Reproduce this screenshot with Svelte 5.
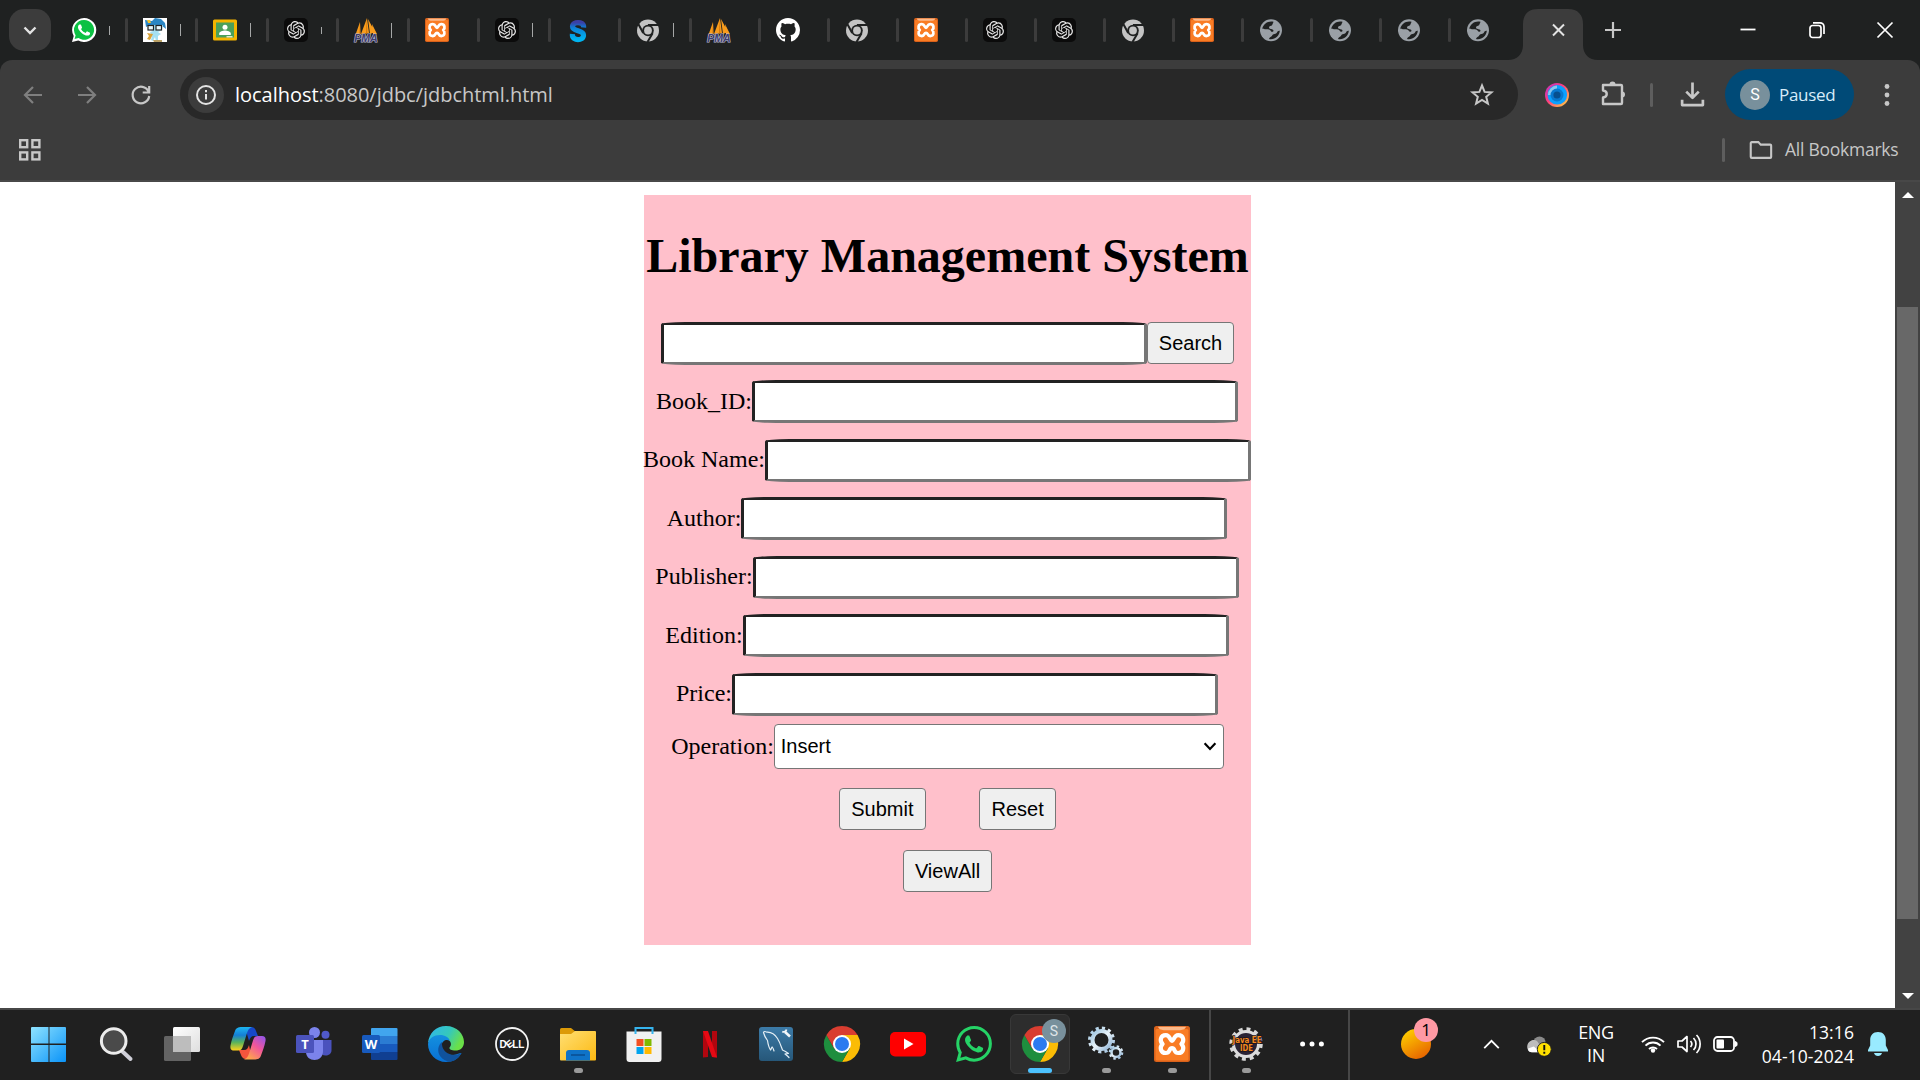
<script>
  const tabs = [
    { icon: 'whatsapp', title: 9 },
    { icon: 'mascot', title: 12 },
    { icon: 'classroom', title: 14 },
    { icon: 'openai', title: 7 },
    { icon: 'pma', title: 15 },
    { icon: 'xampp', title: 0 },
    { icon: 'openai', title: 14 },
    { icon: 'sletter', title: 0 },
    { icon: 'chromegray', title: 14 },
    { icon: 'pma', title: 0 },
    { icon: 'github', title: 0 },
    { icon: 'chromegray', title: 0 },
    { icon: 'xampp', title: 0 },
    { icon: 'openai', title: 0 },
    { icon: 'openai', title: 0 },
    { icon: 'chromegray', title: 0 },
    { icon: 'xampp', title: 0 },
    { icon: 'globe', title: 0 },
    { icon: 'globe', title: 0 },
    { icon: 'globe', title: 0 },
    { icon: 'globe', title: 0 }
  ];

  const fields = ['Book_ID:', 'Book Name:', 'Author:', 'Publisher:', 'Edition:', 'Price:'];

  const pinned = [
    { icon: 'windows' },
    { icon: 'search' },
    { icon: 'taskview' },
    { icon: 'copilot' },
    { icon: 'teams' },
    { icon: 'word' },
    { icon: 'edge' },
    { icon: 'dell' },
    { icon: 'explorer', running: true },
    { icon: 'store' },
    { icon: 'netflix' },
    { icon: 'mysql' },
    { icon: 'chrome' },
    { icon: 'youtube' },
    { icon: 'whatsappline' },
    { icon: 'chrome', active: true },
    { icon: 'gears', running: true },
    { icon: 'xampp', running: true }
  ];
</script>

{#snippet icon(name)}
  {#if name === 'whatsapp'}
    <svg viewBox="0 0 24 24"><path fill="#fff" d="M12 0a12 12 0 0 0-10.3 18L0 24l6.3-1.6A12 12 0 1 0 12 0z"/><path fill="#0cc143" d="M12 2a9.9 9.9 0 0 0-8.4 15.200l-1 3.800 3.900-1A9.900 9.900 0 1 0 12 2z"/><path fill="#fff" d="M17.472 14.382c-.297-.149-1.758-.867-2.03-.967-.273-.099-.471-.148-.67.15-.197.297-.767.966-.94 1.164-.173.199-.347.223-.644.075-.297-.15-1.255-.463-2.39-1.475-.883-.788-1.48-1.761-1.653-2.059-.173-.297-.018-.458.13-.606.134-.133.298-.347.446-.52.149-.174.198-.298.298-.497.099-.198.05-.371-.025-.52-.075-.149-.669-1.612-.916-2.207-.242-.579-.487-.5-.669-.51-.173-.008-.371-.01-.57-.01-.198 0-.52.074-.792.372-.272.297-1.04 1.016-1.04 2.479 0 1.462 1.065 2.875 1.213 3.074.149.198 2.096 3.2 5.077 4.487.709.306 1.262.489 1.694.625.712.227 1.36.195 1.871.118.571-.085 1.758-.719 2.006-1.413.248-.694.248-1.289.173-1.413-.074-.124-.272-.198-.57-.347"/></svg>
  {:else if name === 'whatsappline'}
    <svg viewBox="0 0 24 24"><path fill="#25d366" d="M17.472 14.382c-.297-.149-1.758-.867-2.03-.967-.273-.099-.471-.148-.67.15-.197.297-.767.966-.94 1.164-.173.199-.347.223-.644.075-.297-.15-1.255-.463-2.39-1.475-.883-.788-1.48-1.761-1.653-2.059-.173-.297-.018-.458.13-.606.134-.133.298-.347.446-.52.149-.174.198-.298.298-.497.099-.198.05-.371-.025-.52-.075-.149-.669-1.612-.916-2.207-.242-.579-.487-.5-.669-.51-.173-.008-.371-.01-.57-.01-.198 0-.52.074-.792.372-.272.297-1.04 1.016-1.04 2.479 0 1.462 1.065 2.875 1.213 3.074.149.198 2.096 3.2 5.077 4.487.709.306 1.262.489 1.694.625.712.227 1.36.195 1.871.118.571-.085 1.758-.719 2.006-1.413.248-.694.248-1.289.173-1.413-.074-.124-.272-.198-.57-.347m-5.421 7.403h-.004a9.87 9.87 0 01-5.031-1.378l-.361-.214-3.741.982.998-3.648-.235-.374a9.86 9.86 0 01-1.51-5.26c.001-5.45 4.436-9.884 9.888-9.884 2.64 0 5.122 1.03 6.988 2.898a9.825 9.825 0 012.893 6.994c-.003 5.45-4.437 9.884-9.885 9.884m8.413-18.297A11.815 11.815 0 0012.05 0C5.495 0 .16 5.335.157 11.892c0 2.096.547 4.142 1.588 5.945L.057 24l6.305-1.654a11.882 11.882 0 005.683 1.448h.005c6.554 0 11.89-5.335 11.893-11.893a11.821 11.821 0 00-3.48-8.413z"/></svg>
  {:else if name === 'mascot'}
    <svg viewBox="0 0 24 24"><rect width="24" height="24" fill="#fff"/><path fill="#2a86c4" d="M2 2l7 1 3-3 6 1 4 4 1 6-5-4H7L3 9z"/><path fill="#f2c230" d="M4 2l3 0 1 3-3 0z"/><path fill="#a5e0f2" d="M6 7h14l-1 5-4 2 3 2-3 2 0 5h-2l-1-4-2 4-2-1 1-4-2-4 3-1-4-2z"/><rect x="5" y="7.500" width="5.500" height="4.500" fill="#e8f8fc" stroke="#222" stroke-width="1.200"/><rect x="13" y="7.500" width="5.500" height="4.500" fill="#e8f8fc" stroke="#222" stroke-width="1.200"/><path fill="#d8a23a" d="M4 15l6 1-3 6-3-1 2-3z"/><path fill="#b9a064" d="M10 22h9v2h-8z"/></svg>
  {:else if name === 'classroom'}
    <svg viewBox="0 0 24 24"><rect y="1.500" width="24" height="21" rx="1.500" fill="#f4b400"/><rect x="3" y="4.500" width="18" height="15" fill="#4ba05a"/><circle cx="12" cy="9.300" r="2.500" fill="#fff"/><path fill="#fff" d="M6.200 17v-1.500c0-2 3.800-3 5.800-3s5.800 1 5.800 3V17z"/><path fill="#e3ecc8" d="M13.500 18h6v1.500h-6z"/></svg>
  {:else if name === 'openai'}
    <svg viewBox="0 0 24 24"><rect width="24" height="24" rx="5" fill="#0b0b0b"/><path fill="#e6e6e6" transform="translate(3 3) scale(.75)" d="M22.2819 9.8211a5.9847 5.9847 0 0 0-.5157-4.9108 6.0462 6.0462 0 0 0-6.5098-2.9A6.0651 6.0651 0 0 0 4.9807 4.1818a5.9847 5.9847 0 0 0-3.9977 2.9 6.0462 6.0462 0 0 0 .7427 7.0966 5.98 5.98 0 0 0 .511 4.9107 6.051 6.051 0 0 0 6.5146 2.9001A5.9847 5.9847 0 0 0 13.2599 24a6.0557 6.0557 0 0 0 5.7718-4.2058 5.9894 5.9894 0 0 0 3.9977-2.9001 6.0557 6.0557 0 0 0-.7475-7.0729zm-9.022 12.6081a4.4755 4.4755 0 0 1-2.8764-1.0408l.1419-.0804 4.7783-2.7582a.7948.7948 0 0 0 .3927-.6813v-6.7369l2.02 1.1686a.071.071 0 0 1 .038.0615v5.5826a4.504 4.504 0 0 1-4.4945 4.4849zm-9.6607-4.1254a4.4708 4.4708 0 0 1-.5346-3.0137l.142.0852 4.783 2.7582a.7712.7712 0 0 0 .7806 0l5.8428-3.3685v2.3324a.0804.0804 0 0 1-.0332.0615L9.74 19.9502a4.4992 4.4992 0 0 1-6.1408-1.6464zM2.3408 7.8956a4.485 4.485 0 0 1 2.3655-1.9728V11.6a.7664.7664 0 0 0 .3879.6765l5.8144 3.3543-2.0201 1.1685a.0757.0757 0 0 1-.071 0l-4.8303-2.7865A4.504 4.504 0 0 1 2.3408 7.872zm16.5963 3.8558L13.1038 8.364 15.1192 7.2a.0757.0757 0 0 1 .071 0l4.8303 2.7913a4.4944 4.4944 0 0 1-.6765 8.1042v-5.6772a.79.79 0 0 0-.407-.667zm2.0107-3.0231l-.142-.0852-4.7735-2.7818a.7759.7759 0 0 0-.7854 0L9.409 9.2297V6.8974a.0662.0662 0 0 1 .0284-.0615l4.8303-2.7866a4.4992 4.4992 0 0 1 6.6802 4.66zM8.3065 12.863l-2.02-1.1638a.0804.0804 0 0 1-.038-.0567V6.0742a4.4992 4.4992 0 0 1 7.3757-3.4537l-.142.0805L8.704 5.459a.7948.7948 0 0 0-.3927.6813zm1.0976-2.3654l2.602-1.4998 2.6069 1.4998v2.9994l-2.5974 1.4997-2.6067-1.4997Z"/></svg>
  {:else if name === 'pma'}
    <svg viewBox="0 0 24 24"><path fill="#f89c1c" d="M6 4L1 18h5.500zM13 0L7 16l8-1zM14 1l7 13-5 2zM18 6l5 10h-4z"/><path fill="#c96f0a" d="M12.600 1l.8 15h-1.200zM6 4l.5 13H5.400z"/><text x="12" y="23.800" text-anchor="middle" class="pma-text" textLength="23.500" lengthAdjust="spacingAndGlyphs">PMA</text></svg>
  {:else if name === 'xampp'}
    <svg viewBox="0 0 36 36"><rect width="36" height="36" rx="2.500" fill="#d9611a"/><rect x="1.500" y="3" width="33" height="31.500" rx="1.500" fill="#f97c24"/><path fill="#fbb98a" d="M4 .8h28c-1 3-4 3.400-7 3.400H11C8 4.200 5 3.800 4 .8z"/><path fill="none" stroke="#fff" stroke-width="4.200" stroke-linejoin="round" d="M18 14.800C15.800 14.700 16.200 9.200 11.800 9.200C6.200 9.200 5.500 15 8.600 18C5.500 21 6.200 27 11.800 27C16.200 27 14.800 22.200 18 22.200C21.200 22.200 19.800 27 24.200 27C29.800 27 30.500 21 27.400 18C30.500 15 29.800 9.200 24.200 9.200C19.800 9.200 20.200 14.700 18 14.800z"/></svg>
  {:else if name === 'sletter'}
    <svg viewBox="0 0 24 24"><defs><linearGradient id="sgrad" x2="0" y2="1"><stop stop-color="#3a3fa6"/><stop offset=".3" stop-color="#0c7fd6"/><stop offset="1" stop-color="#00b4f0"/></linearGradient></defs><path fill="none" stroke="url(#sgrad)" stroke-width="5.200" d="M17.600 9.500C18 5.500 14.500 4.600 12 4.600S6.500 5.500 6.500 8.600c0 5 11 3.400 11 8.400 0 3.500-3 4.600-5.500 4.600s-6-1.200-5.600-5.600"/></svg>
  {:else if name === 'chromegray'}
    <svg viewBox="0 0 24 24"><circle cx="12" cy="12.500" r="11" fill="#c4c4c4"/><path fill="none" stroke="#1f2121" stroke-width="2" d="M12 7h10.500M7.200 15L2.300 6M16.600 15.200L11.500 24"/><circle cx="12" cy="12.500" r="5.800" fill="#1f2121"/><circle cx="12" cy="12.500" r="3.900" fill="#c4c4c4"/></svg>
  {:else if name === 'github'}
    <svg viewBox="0 0 16 16"><path fill="#fff" d="M8 0C3.58 0 0 3.58 0 8c0 3.54 2.29 6.53 5.47 7.59.4.07.55-.17.55-.38 0-.19-.01-.82-.01-1.49-2.01.37-2.53-.49-2.69-.94-.09-.23-.48-.94-.82-1.13-.28-.15-.68-.52-.01-.53.63-.01 1.08.58 1.23.82.72 1.21 1.87.87 2.33.66.07-.52.28-.87.51-1.07-1.78-.2-3.64-.89-3.64-3.95 0-.87.31-1.59.82-2.15-.08-.2-.36-1.02.08-2.12 0 0 .67-.21 2.2.82.64-.18 1.32-.27 2-.27.68 0 1.36.09 2 .27 1.53-1.04 2.2-.82 2.2-.82.44 1.1.16 1.92.08 2.12.51.56.82 1.27.82 2.15 0 3.07-1.87 3.75-3.65 3.95.29.25.54.73.54 1.48 0 1.070-.01 1.930-.01 2.200 0 .21.150.46.550.380A8.013 8.013 0 0016 8c0-4.420-3.580-8-8-8z"/></svg>
  {:else if name === 'globe'}
    <svg viewBox="0 0 24 24"><circle cx="12" cy="12.300" r="11" fill="#9aa0a6"/><path fill="#1f2121" d="M14.500 3.800C9.500 2.500 4.500 5.500 3.300 10.500c2 1.200 4.500.4 6.700.9 2 .5 1.500 2.300 3.300 2.300 1.500 0 1.600-1.700.2-2.200-1.500-.6-3.500-.4-3.500-2 0-1.800 2.800-1.200 3.300-2.700.3-1.200 1-2 1.200-3z"/><path fill="#1f2121" d="M10 21c5.500 1.200 10.500-3 10.800-8.200-1.300-.5-2.300.4-2.800 1.700-.6 1.500-2.200 1.500-3.500 1.700-1.500.3-1 1.700-2.200 2.200-1.100.5-2 1.200-2.300 2.600z"/></svg>
  {:else if name === 'windows'}
    <svg viewBox="1.5 0 36 36"><defs><linearGradient id="win" x2="1" y2="1"><stop stop-color="#8fe3ff"/><stop offset="1" stop-color="#0a93f8"/></linearGradient></defs><path fill="url(#win)" d="M1.500 1h16.500v16.500H.5V2a1 1 0 0 1 1-1zM19 1h15.500a1 1 0 0 1 1 1v15.500H19zM.5 19H18v17H1.500a1 1 0 0 1-1-1zM19 19h16.500v16a1 1 0 0 1-1 1H19z"/></svg>
  {:else if name === 'search'}
    <svg viewBox="0 0 36 36"><path stroke="#cfcfd8" stroke-width="4" stroke-linecap="round" d="M25 26l7.500 7"/><circle cx="15.700" cy="15" r="12.300" fill="#4a4a4a" stroke="#ececec" stroke-width="3"/></svg>
  {:else if name === 'taskview'}
    <svg viewBox="0 0 36 36"><defs><linearGradient id="tv" x2="1" y2="1"><stop stop-color="#fff"/><stop offset="1" stop-color="#dedede"/></linearGradient></defs><rect y="10" width="27" height="25" rx="1.500" fill="#636363"/><rect x="9" y="1" width="27" height="25" rx="1.500" fill="url(#tv)"/><path fill="#bdbdbd" d="M9 10h18v16H9z"/></svg>
  {:else if name === 'copilot'}
    <svg viewBox="0 0 36 36"><defs><linearGradient id="cp1" x2="0" y2="1"><stop stop-color="#1db5f2"/><stop offset=".35" stop-color="#157fd6"/><stop offset=".65" stop-color="#58b35c"/><stop offset="1" stop-color="#ffd21a"/></linearGradient><linearGradient id="cp2" x1="1" x2=".3" y2="1"><stop stop-color="#8a55f0"/><stop offset=".5" stop-color="#f2569a"/><stop offset="1" stop-color="#ffa64c"/></linearGradient></defs><path fill="#1648c8" d="M15 1h6c3 0 4 1.500 5 4l2 5h-4c-3 0-4 2-5 5z"/><path fill="#f5553d" d="M9 24h5c3 0 4-2 5-5l3 14c-6 0-9 1-11-4z"/><path fill="url(#cp1)" d="M12 1h10c-3 1-4 3-5 6l-4 13c-1 3-2 4.500-5 4.500H4c-3 0-4-2-3.500-5C1.500 14 3.500 9 5 5c1-3 3-4 7-4z"/><path fill="url(#cp2)" d="M24 33.500H14c3-1 4-3 5-6l4-13c1-3 2-4.500 5-4.500h4c3 0 4 2 3.500 5-1 5.500-3 10.500-4.500 14.500-1 3-3 4-7 4z"/></svg>
  {:else if name === 'teams'}
    <svg viewBox="0 0 36 36"><circle cx="29.500" cy="8.700" r="4" fill="#5059c9"/><path fill="#4a52bd" d="M25 14h10.500v10c0 4-3 5.500-6 5.500S25 28 25 25z"/><circle cx="18.500" cy="6.500" r="5.500" fill="#7b83eb"/><path fill="#7b83eb" d="M10 14h17v11c0 6-4 9-8.500 9S10 31 10 26z"/><rect y="9" width="18" height="18" rx="1.500" fill="#4b53bc"/><text x="9" y="22.500" text-anchor="middle" class="app-letter">T</text></svg>
  {:else if name === 'word'}
    <svg viewBox="0 0 36 36"><path fill="#41a5ee" d="M10 2h24.500a1 1 0 0 1 1 1v7H9V3a1 1 0 0 1 1-1z"/><path fill="#2b7cd3" d="M9 10h26.500v8H9z"/><path fill="#185abd" d="M9 18h26.500v8H9z"/><path fill="#103f91" d="M9 26h26.500v7a1 1 0 0 1-1 1H10a1 1 0 0 1-1-1z"/><rect y="9" width="18" height="18" rx="1.500" fill="#185abd"/><text x="9" y="22.800" text-anchor="middle" class="app-letter">W</text></svg>
  {:else if name === 'edge'}
    <svg viewBox="0 0 36 36"><defs><linearGradient id="ed1" x2="1" y2=".4"><stop stop-color="#2fb6ee"/><stop offset=".6" stop-color="#35c8bb"/><stop offset="1" stop-color="#6ae048"/></linearGradient><linearGradient id="ed2" x2="0" y2="1"><stop stop-color="#1490df"/><stop offset="1" stop-color="#0870d4"/></linearGradient></defs><path fill="url(#ed1)" d="M0 17C1 7 8 0 18 0c11 0 18 8 18 16 0 6-4 8.500-8.500 8.500-4 0-6.500-1-6-3 2.500-2 2-7-3-8.500C12 10 5 10 0 17z"/><path fill="url(#ed2)" d="M0 18C1 12 6 9 12 9c5 0 9 2.500 10 6-3-2-8-1-8.500 5-.5 7 6 10 12 9 4-.7 7-2.500 8-2-3 6-9 9-15.500 9C8 36 0 28 0 18z"/><path fill="#10529c" d="M14 16c-4 3-5 9-2 14 3 4 8 6 11 5.500 5-1 8-4 10.500-8.500-4 2-8 2.500-12 1-5-2-8-6-7.500-12z"/></svg>
  {:else if name === 'dell'}
    <svg viewBox="0 0 36 36"><circle cx="18" cy="18" r="16" fill="none" stroke="#f2f2f2" stroke-width="1.800"/><text x="5.500" y="21.700" class="dell-text">D</text><text x="18.200" y="21.700" class="dell-text">LL</text><text x="15.500" y="21.500" text-anchor="middle" class="dell-text" transform="rotate(-38 15.500 18)">E</text></svg>
  {:else if name === 'explorer'}
    <svg viewBox="0 0 36 36"><defs><linearGradient id="fx" x2="1" y2="1"><stop stop-color="#ffdf73"/><stop offset="1" stop-color="#fcb912"/></linearGradient></defs><path fill="#dc9a08" d="M0 3.500A1.500 1.500 0 0 1 1.500 2H11l5 4v5H0z"/><path fill="url(#fx)" d="M0 8h11l4-3h20a1 1 0 0 1 1 1v27.500a1 1 0 0 1-1 1H1a1 1 0 0 1-1-1z"/><path fill="#0f73c8" d="M6 34.500V27a3 3 0 0 1 3-3h18a3 3 0 0 1 3 3v7.500z"/><path stroke="#0a4c91" stroke-width="1.500" d="M11 29h14"/></svg>
  {:else if name === 'store'}
    <svg viewBox="0 0 36 36"><path fill="#f1f1f1" d="M.5 5.500h35V33a3 3 0 0 1-3 3h-29a3 3 0 0 1-3-3z"/><path fill="none" stroke="#35b4ee" stroke-width="2" d="M9.500 8V2h17v6"/><path fill="#f25022" d="M10.500 13h7v7h-7z"/><path fill="#7fba00" d="M18.500 13h7v7h-7z"/><path fill="#00a4ef" d="M10.500 21h7v7h-7z"/><path fill="#ffb900" d="M18.500 21h7v7h-7z"/></svg>
  {:else if name === 'netflix'}
    <svg viewBox="0 0 36 36"><path fill="#b1060f" d="M11 5h5v26l-5 .5zM20 5h5v26.500l-5-.5z"/><path fill="#e50914" d="M11 5h5l9 26.500-5-.5z"/></svg>
  {:else if name === 'mysql'}
    <svg viewBox="0 0 36 36"><defs><linearGradient id="my" x2="0" y2="1"><stop stop-color="#3c7ba8"/><stop offset="1" stop-color="#265779"/></linearGradient></defs><rect x="1" y="1" width="34" height="34" rx="3" fill="url(#my)"/><path fill="none" stroke="#e3eef5" stroke-width="1.200" stroke-linejoin="round" stroke-linecap="round" d="M16 25c-.5-2-1-3-1.800-4-1 1-1 2.500-1.700 3-2-3-2.500-6-3-9.500C7.500 12 6 8.500 5.500 6.500c.5-1.500 2-1 3.500-.3 4-.2 8 2.300 10.500 6.300 2.500 4 3.500 7.500 5 11.500 2.500 1 4 2 6 3.500-1.500.2-2.500 0-3.500.5 1.500 1 3 2.300 4 3.500"/><path stroke="#f2f6f9" stroke-width="2.600" d="M27 6l5 4.500"/><path fill="none" stroke="#f2f6f9" stroke-width="1.800" d="M28.500 3.500c-.5 2-2.500 3-4.200 2"/></svg>
  {:else if name === 'chrome'}
    <svg viewBox="0 0 36 36"><path fill="#fbbc05" d="M18 9h15.590A18 18 0 0 1 18 36l8-14z"/><path fill="#1e8e3e" d="M2.410 9A18 18 0 0 0 18 36l7.800-13.500H10.200z"/><path fill="#d93d30" d="M2.410 9L10.200 22.500 18 18 18 9h15.590A18 18 0 0 0 2.410 9z"/><circle cx="18" cy="18" r="9" fill="#fff"/><circle cx="18" cy="18" r="7" fill="#2b7bf0"/></svg>
  {:else if name === 'youtube'}
    <svg viewBox="0 0 36 36"><rect y="6" width="36" height="24.500" rx="5" fill="#f00"/><path fill="#fff" d="M14 12.500v11l9.500-5.500z"/></svg>
  {:else if name === 'gears'}
    <svg viewBox="0 0 36 36"><defs><linearGradient id="gr" x2="1" y2="1"><stop stop-color="#9cc4e0"/><stop offset=".5" stop-color="#eaf4fa"/><stop offset="1" stop-color="#8fb4d6"/></linearGradient></defs><circle cx="13.500" cy="14" r="12" fill="none" stroke="url(#gr)" stroke-width="3" stroke-dasharray="3.142 3.142"/><circle cx="13.500" cy="14" r="9" fill="none" stroke="url(#gr)" stroke-width="4"/><circle cx="28" cy="26.500" r="6.200" fill="none" stroke="url(#gr)" stroke-width="2.200" stroke-dasharray="2.430 2.430"/><circle cx="28" cy="26.500" r="4.500" fill="none" stroke="url(#gr)" stroke-width="2.500"/></svg>
  {/if}
{/snippet}

<div class="screen">
  <header class="tabstrip">
    <div class="tab-search">
      <svg viewBox="0 0 42 42"><path d="M15.500 18.500l5.500 5.500 5.500-5.500" fill="none" stroke="#e3e3e3" stroke-width="2.400"/></svg>
    </div>
    <div class="tabs">
      {#each tabs as tab, i}
        <div class="tab" class:wide={i < 9}>
          <span class="fav">{@render icon(tab.icon)}</span>
          {#if tab.title}<i class="title-edge" style="height: {tab.title}px"></i>{/if}
          {#if i < tabs.length - 1}<i class="divider"></i>{/if}
        </div>
      {/each}
    </div>
    <div class="active-tab">
      <svg viewBox="0 0 90 51"><path fill="#3c3c3c" d="M0 51c9 0 15-6 15-15V15C15 6 20 0 30 0h30c10 0 15 6 15 15v21c0 9 6 15 15 15z"/><path d="M45 15.500l11 11m0-11l-11 11" stroke="#e3e3e3" stroke-width="2"/></svg>
    </div>
    <svg class="plus" viewBox="0 0 16 16"><path d="M8 0v16M0 8h16" stroke="#c7c7c7" stroke-width="2.200"/></svg>
    <div class="window-controls">
      <svg viewBox="0 0 18 18"><path d="M1.500 8.500h15" stroke="#fff" stroke-width="1.800"/></svg>
      <svg viewBox="0 0 18 18"><rect x="2" y="4.500" width="11" height="12" rx="2.500" fill="none" stroke="#fff" stroke-width="1.700"/><path d="M5 1.800h7a4 4 0 0 1 4 4V13" fill="none" stroke="#fff" stroke-width="1.700"/></svg>
      <svg viewBox="0 0 18 18"><path d="M1.500 1.500l15 15m0-15l-15 15" stroke="#fff" stroke-width="1.700"/></svg>
    </div>
  </header>

  <section class="chrome-bars">
    <div class="toolbar">
      <div class="nav">
        <svg viewBox="0 0 24 24"><path d="M21 12H4m8-8l-8 8 8 8" fill="none" stroke="#7f7f7f" stroke-width="2.200"/></svg>
        <svg viewBox="0 0 24 24"><path d="M3 12h17m-8-8l8 8-8 8" fill="none" stroke="#7f7f7f" stroke-width="2.200"/></svg>
        <svg viewBox="0 0 24 24"><path d="M19.500 8.500A8.300 8.300 0 1 0 20.200 13M20.200 3v6.500h-6.500" fill="none" stroke="#c7c7c7" stroke-width="2.200"/></svg>
      </div>
      <div class="omnibox">
        <span class="site-info">
          <svg viewBox="0 0 24 24"><circle cx="12" cy="12" r="9" fill="none" stroke="#e3e3e3" stroke-width="2"/><path d="M12 11v5.500M12 7v2.200" stroke="#e3e3e3" stroke-width="2"/></svg>
        </span>
        <span class="url"><b>localhost</b>:8080/jdbc/jdbchtml.html</span>
        <svg class="star" viewBox="0 0 24 24"><path d="M12 2.500l2.600 6.400 6.900.5-5.300 4.400 1.700 6.700L12 16.900l-5.900 3.600 1.700-6.700-5.300-4.400 6.900-.5z" fill="none" stroke="#c7c7c7" stroke-width="2"/></svg>
      </div>
      <div class="actions">
        <svg class="lens" viewBox="0 0 24 24"><defs><linearGradient id="ln" x2="1" y2="1"><stop stop-color="#b832c8"/><stop offset=".45" stop-color="#ff3f7d"/><stop offset="1" stop-color="#ffe13a"/></linearGradient></defs><circle cx="12" cy="12" r="12" fill="url(#ln)"/><circle cx="12.300" cy="11.800" r="9.800" fill="#0aa0ff"/><path fill="#8cc7ee" d="M3 12a9.500 9.500 0 0 1 9-9.500V8l-4 4z"/><circle cx="12" cy="12" r="6.500" fill="#0878cf"/><circle cx="12" cy="12" r="3.600" fill="#064f8f"/></svg>
        <svg class="puzzle" viewBox="0 0 26 26"><path d="M3 5h18a1 1 0 0 1 1 1v17a1 1 0 0 1-1 1H3v-6.500c5-.5 5-6.500 0-7z" fill="none" stroke="#c7c7c7" stroke-width="2.400" stroke-linejoin="round"/><path d="M9.500 4.500a3 3 0 0 1 6 0zM22 11.500a3 3 0 0 1 0 6z" fill="#c7c7c7"/></svg>
        <i class="bar"></i>
        <svg class="download" viewBox="0 0 26 26"><path d="M13 0v16m-6.500-6.500L13 16l6.500-6.500M2.200 18v5.500h21.600V18" fill="none" stroke="#c7c7c7" stroke-width="2.800" stroke-linejoin="round"/></svg>
        <div class="profile"><span class="avatar">S</span><span class="paused">Paused</span></div>
        <svg class="kebab" viewBox="0 0 6 26"><circle cx="3" cy="4.500" r="2.400" fill="#c7c7c7"/><circle cx="3" cy="13" r="2.400" fill="#c7c7c7"/><circle cx="3" cy="21.500" r="2.400" fill="#c7c7c7"/></svg>
      </div>
    </div>
    <div class="bookmarks">
      <svg class="apps" viewBox="0 0 22 22"><g fill="none" stroke="#c7c7c7" stroke-width="2.400"><rect x="1.200" y="1.200" width="7" height="7"/><rect x="13.400" y="1.200" width="7" height="7"/><rect x="1.200" y="13.400" width="7" height="7"/><rect x="13.400" y="13.400" width="7" height="7"/></g></svg>
      <div class="all">
        <i class="bar"></i>
        <svg class="folder" viewBox="0 0 24 20"><path d="M1.200 2.200a1 1 0 0 1 1-1h7l2.500 2.600h10a1 1 0 0 1 1 1v12a1 1 0 0 1-1 1H2.200a1 1 0 0 1-1-1z" fill="none" stroke="#c7c7c7" stroke-width="2.200"/></svg>
        <span class="all-text">All Bookmarks</span>
      </div>
    </div>
  </section>

  <main class="viewport">
    <div class="page">
      <form class="library">
        <h1>Library Management System</h1>
        <div class="row"><input type="text" aria-label="Search" /><button type="button">Search</button></div>
        {#each fields as field}
          <label class="row field"><span>{field}</span><input type="text" /></label>
        {/each}
        <div class="row operation">
          <span>Operation:</span>
          <div class="select">Insert<svg viewBox="0 0 14 10"><path d="M1 1.500l6 6.300 6-6.300" fill="none" stroke="#000" stroke-width="2.400"/></svg></div>
        </div>
        <div class="row submit-row"><button type="button">Submit</button><button type="button">Reset</button></div>
        <div class="row view-row"><button type="button">ViewAll</button></div>
      </form>
    </div>
    <div class="scrollbar">
      <svg viewBox="0 0 12 6"><path d="M0 6l6-6 6 6z" fill="#fff"/></svg>
      <div class="thumb"></div>
      <svg viewBox="0 0 12 6"><path d="M0 0l6 6 6-6z" fill="#fff"/></svg>
    </div>
  </main>

  <footer class="taskbar">
    <div class="apps-row">
      {#each pinned as app}
        <div class="app" class:active={app.active}>
          <span class="app-icon">{@render icon(app.icon)}</span>
          {#if app.active}<span class="badge">S</span>{/if}
          {#if app.running || app.active}<i class="indicator"></i>{/if}
        </div>
      {/each}
    </div>
    <div class="extra">
      <div class="app">
        <span class="app-icon">
          <svg viewBox="0 0 36 36"><circle cx="18" cy="18" r="15" fill="none" stroke="#d8d8d8" stroke-width="3.500" stroke-dasharray="3.930 3.930"/><circle cx="18" cy="18" r="12.500" fill="#2a2334" stroke="#dcdcdc" stroke-width="3"/><text x="19" y="17" text-anchor="middle" class="java-text" textLength="29" lengthAdjust="spacingAndGlyphs">Java EE</text><text x="18.500" y="25" text-anchor="middle" class="java-text" textLength="13" lengthAdjust="spacingAndGlyphs">IDE</text></svg>
        </span>
        <i class="indicator"></i>
      </div>
      <div class="app">
        <svg class="dots" viewBox="0 0 24 6"><g fill="#fff"><circle cx="2.600" cy="3" r="2.500"/><circle cx="12" cy="3" r="2.500"/><circle cx="21.400" cy="3" r="2.500"/></g></svg>
      </div>
    </div>
    <div class="tray">
      <div class="weather">
        <svg viewBox="0 0 30 30"><defs><linearGradient id="sun" x1=".2" x2=".8" y2="1"><stop stop-color="#ffd000"/><stop offset="1" stop-color="#e55e00"/></linearGradient></defs><circle cx="15" cy="15" r="15" fill="url(#sun)"/></svg>
        <span class="count">1</span>
      </div>
      <svg class="caret" viewBox="0 0 18 11"><path d="M1 10l8-8 8 8" fill="none" stroke="#fff" stroke-width="2"/></svg>
      <svg class="cloud" viewBox="0 0 26 22"><circle cx="13" cy="7" r="6.500" fill="#8a8a8a"/><path fill="#bdbdbd" d="M5 4.500c3-1 5.500 0 7 3l5 6-3 3.500H5c-6 0-7-10 0-12.500z"/><path fill="#fff" d="M1 13l6-2 7 6H5c-3 0-4-2-4-4z"/><circle cx="18" cy="14" r="7.300" fill="#ffe000" stroke="#1f1f1f" stroke-width="1"/><path d="M18 9.500v5.500M18 16.500v2" stroke="#111" stroke-width="2"/></svg>
      <div class="lang"><span>ENG</span><span>IN</span></div>
      <svg class="wifi" viewBox="0 0 24 18"><g fill="none" stroke="#fff" stroke-width="1.900"><path d="M1 7.200a15.500 15.500 0 0 1 22 0M4.500 10.700a10.500 10.500 0 0 1 15 0M8 14a6 6 0 0 1 8 0"/></g><circle cx="12" cy="15.500" r="2.200" fill="#fff"/></svg>
      <svg class="sound" viewBox="0 0 24 20"><g fill="none" stroke="#fff" stroke-width="1.700"><path d="M1 7v6h4l5 4.500v-15L5 7zM13.500 7a4.500 4.500 0 0 1 0 6M16.500 4a8.500 8.500 0 0 1 0 12M19.500 1a13 13 0 0 1 0 18" stroke-linejoin="round"/></g></svg>
      <svg class="battery" viewBox="0 0 24 16"><rect x="1" y="1" width="20" height="14" rx="3.500" fill="none" stroke="#fff" stroke-width="1.800"/><rect x="3.500" y="3.500" width="7.500" height="9" rx="1" fill="#fff"/><path d="M22 5.500l2 1v3l-2 1z" fill="#fff" stroke="#fff"/></svg>
      <div class="clock"><span>13:16</span><span>04-10-2024</span></div>
      <svg class="bell" viewBox="0 0 20 24"><path fill="#99ebff" d="M10 0c5 0 7.800 3.500 7.800 8v5.500L20 18v1.500H0V18l2.200-4.500V8C2.200 3.500 5 0 10 0zM6 21h8c-.5 2-2 3-4 3s-3.500-1-4-3z"/></svg>
    </div>
  </footer>
</div>

<style>
  :global(body) { margin: 0; overflow: hidden; }
  .screen { width: 1920px; height: 1080px; display: flex; flex-direction: column; overflow: hidden; font-family: "Open Sans", "Noto Sans", sans-serif; }
  svg { display: block; overflow: visible; }

  .tabstrip { position: relative; z-index: 1; height: 60px; box-sizing: border-box; padding-left: 9px; background: #1f2121; display: flex; align-items: center; flex: none; }
  .tab-search { width: 42px; height: 42px; border-radius: 15px; background: #3c3c3c; margin-right: 21px; flex: none; }
  .tabs { display: flex; flex: none; width: 1436px; }
  .tab { width: 69px; height: 24px; display: flex; align-items: center; box-sizing: border-box; padding-right: 15px; flex: none; }
  .tab.wide { width: 70.5px; }
  .fav { width: 24px; height: 24px; flex: none; }
  .title-edge { width: 1px; background: #a5a7a7; margin-left: 13px; }
  .divider { width: 3px; height: 24px; border-radius: 2px; background: #3c3c3c; margin-left: auto; }
  .pma-text { font: italic bold 10px "Liberation Sans", sans-serif; fill: #3d3d70; stroke: #b9b9cc; stroke-width: 1.2px; paint-order: stroke; }
  .active-tab { width: 90px; height: 51px; align-self: flex-end; flex: none; }
  .active-tab svg { width: 90px; height: 51px; }
  .plus { width: 16px; height: 16px; margin-left: 7px; }
  .window-controls { display: flex; gap: 50.500px; margin-left: auto; margin-right: 26px; }
  .window-controls svg { width: 18px; height: 18px; }

  .chrome-bars { height: 122px; box-sizing: border-box; border-bottom: 2px solid #484848; flex: none; position: relative; z-index: 0; }
  .chrome-bars::before { content: ""; position: absolute; inset: 0; background: #1f2121; z-index: -2; }
  .chrome-bars::after { content: ""; position: absolute; inset: 0; background: #3c3c3c; border-radius: 12px 12px 0 0; z-index: -1; }
  .toolbar { height: 51px; padding: 9px 30px 0 21px; display: flex; align-items: center; }
  .nav { display: flex; gap: 30px; width: 159px; flex: none; }
  .nav svg { width: 24px; height: 24px; }
  .omnibox { width: 1338px; height: 51px; border-radius: 26px; background: #282828; display: flex; align-items: center; box-sizing: border-box; padding: 0 24px 0 8px; flex: none; }
  .site-info { width: 36px; height: 36px; border-radius: 50%; background: #3c3c3c; display: grid; place-items: center; }
  .site-info svg { width: 24px; height: 24px; }
  .url { margin-left: 11px; font-size: 20px; line-height: 26px; color: #c7c7c7; letter-spacing: -.03px; white-space: nowrap; }
  .url b { font-weight: 400; color: #fff; }
  .star { width: 24px; height: 24px; margin-left: auto; }
  .actions { flex: 1; display: flex; align-items: center; padding-left: 27px; }
  .lens { width: 24px; height: 24px; }
  .puzzle { width: 26px; height: 26px; margin: -3px 0 0 31px; }
  .bar { width: 3px; height: 24px; border-radius: 2px; background: #5e5e5e; flex: none; }
  .actions .bar { margin-left: 24px; }
  .download { width: 25px; height: 26px; margin-left: 27px; }
  .profile { width: 129px; height: 51px; border-radius: 26px; background: #004a77; margin-left: 20px; display: flex; align-items: center; box-sizing: border-box; padding-left: 15px; color: #d7ecfa; font-size: 17px; }
  .paused { letter-spacing: -.3px; }
  .avatar { width: 30px; height: 30px; border-radius: 50%; background: #78909c; color: #fff; font: 16px/30px Roboto, sans-serif; text-align: center; margin-right: 9px; }
  .kebab { width: 6px; height: 26px; margin-left: auto; }
  .bookmarks { height: 60px; display: flex; align-items: center; justify-content: space-between; padding: 0 22px 0 19px; }
  .apps { width: 22px; height: 22px; }
  .all { display: flex; align-items: center; color: #c7c7c7; font-size: 17.500px; }
  .folder { width: 24px; height: 19px; margin: 0 12px 0 24px; }
  .all-text { width: 113px; white-space: nowrap; letter-spacing: -.25px; line-height: 24px; padding-bottom: 2px; }

  .viewport { height: 826px; display: flex; flex: none; }
  .page { flex: 1; background: #fff; display: flex; justify-content: center; align-items: flex-start; padding-top: 13px; }
  .library { width: 607px; height: 750px; background: #ffc0cb; display: flex; flex-direction: column; font: 24px/28px "Liberation Serif", serif; color: #000; }
  h1 { margin: 32.500px 0 39px; font-size: 48px; line-height: 55px; text-align: center; white-space: nowrap; font-weight: 700; }
  .row { height: 43px; margin-bottom: 15.500px; display: flex; justify-content: center; align-items: center; white-space: nowrap; flex: none; }
  .field { padding-right: 1px; }
  .row span { padding-bottom: 2px; }
  input { width: 486px; height: 43px; box-sizing: border-box; margin: 0; padding: 3px; border: 3px solid; border-color: #222 #767676 #767676 #222; border-radius: 5%; background: #fff; outline: 0; font: 20px "Liberation Sans", sans-serif; flex: none; }
  button { height: 42px; box-sizing: border-box; padding: 0 11px; border: 1px solid #767676; border-radius: 4px; background: #efefef; color: #000; font: 20px "Liberation Sans", sans-serif; flex: none; }
  .operation { height: 45px; margin: -7px 0 19px; }
  .select { width: 450px; height: 45px; box-sizing: border-box; border: 1px solid #767676; border-radius: 4px; background: #fff; padding: 0 6px; display: flex; align-items: center; justify-content: space-between; font: 20px "Liberation Sans", sans-serif; }
  .select svg { width: 14px; height: 9px; }
  .submit-row { height: 42px; gap: 53px; margin-bottom: 20px; }
  .submit-row button { padding: 0 11.500px; }
  .view-row { height: 42px; }

  .scrollbar { width: 25px; background: #424242; display: flex; flex-direction: column; align-items: center; box-sizing: border-box; padding: 10px 0 9px; flex: none; }
  .scrollbar svg { width: 12px; height: 6px; flex: none; }
  .thumb { width: 21px; height: 612px; margin: 109px 0 auto; background: #686868; }

  .taskbar { height: 72px; box-sizing: border-box; border-top: 2px solid #474747; background: #202020; display: flex; flex: none; color: #fff; }
  .apps-row { display: flex; width: 1192px; padding-left: 17px; border-right: 2px solid #474747; flex: none; }
  .extra { display: flex; width: 135px; padding-left: 2px; border-right: 2px solid #474747; flex: none; }
  .app { width: 66px; height: 68px; display: grid; place-items: center; position: relative; flex: none; }
  .app-icon { width: 36px; height: 36px; }
  .app.active::before { content: ""; position: absolute; inset: 4px 3px; border-radius: 6px; background: #2d2d2d; border: 1px solid #383838; }
  .app.active .app-icon { position: relative; }
  .indicator { position: absolute; bottom: 5px; width: 9px; height: 5px; border-radius: 3px; background: #9a9a9a; }
  .app.active .indicator { width: 24px; background: #4cc2ff; }
  .badge { position: absolute; left: 35px; top: 9px; width: 24px; height: 24px; border-radius: 50%; background: #78909c; color: #dfe5e8; font: 14px/24px Roboto, sans-serif; text-align: center; }
  .app-letter { font: bold 13px "Open Sans", sans-serif; fill: #fff; }
  .dell-text { font: bold 10px "Liberation Sans", sans-serif; fill: #fff; }
  .java-text { font: bold 8.500px "DejaVu Sans", sans-serif; fill: #f58a1f; stroke: #1c1218; stroke-width: 1.5px; paint-order: stroke; }
  .dots { width: 24px; height: 6px; }
  .tray { flex: 1; display: flex; align-items: center; padding: 0 32px 2px 51px; }
  .weather { width: 30px; height: 30px; position: relative; }
  .count { position: absolute; left: 13px; top: -11px; width: 24px; height: 24px; border-radius: 50%; background: #ff99a4; color: #000; font-size: 17px; line-height: 24px; text-align: center; }
  .caret { width: 17px; height: 10px; margin-left: 52px; }
  .cloud { width: 25px; height: 21px; margin: 4px 0 0 27px; }
  .lang { display: flex; flex-direction: column; text-align: center; width: 44px; margin-left: 22px; font-size: 18px; line-height: 23px; letter-spacing: -.3px; }
  .wifi { width: 24px; height: 18px; margin-left: 23px; }
  .sound { width: 24px; height: 20px; margin-left: 12px; }
  .battery { width: 24px; height: 16px; margin-left: 12px; }
  .clock { display: flex; flex-direction: column; font-size: 17.500px; line-height: 24px; width: 117px; white-space: nowrap; letter-spacing: .1px; align-items: flex-end; }
  .bell { width: 20px; height: 24px; margin-left: 14px; }
</style>
